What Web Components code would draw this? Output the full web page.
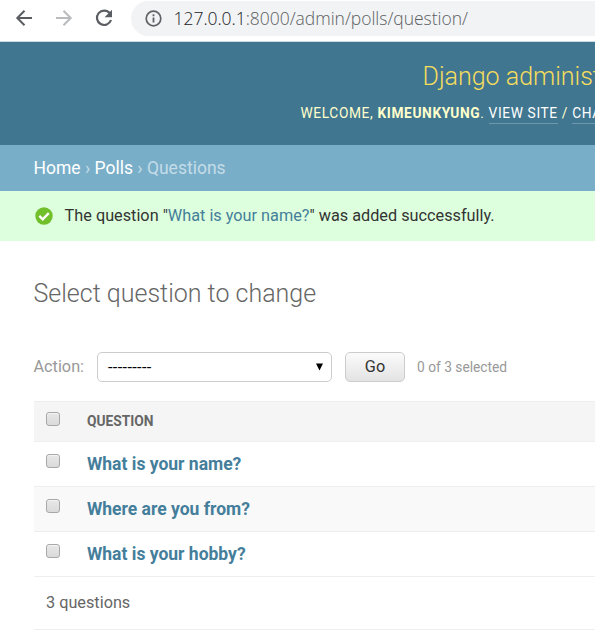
<!DOCTYPE html>
<html lang="en">
<head>
<meta charset="utf-8">
<title>Select question to change</title>
<style>
html,body{margin:0;height:100%;overflow:hidden;background:#fff}
body{font-family:Roboto,"Liberation Sans",sans-serif;font-size:16.25px;color:#333}
</style>
</head>
<body>
<admin-page></admin-page>
<script>
function define(name, html) {
  const template = document.createElement('template');
  template.innerHTML = html;
  customElements.define(name, class extends HTMLElement {
    constructor() {
      super();
      this.attachShadow({mode: 'open'}).append(template.content.cloneNode(true));
    }
  });
}

define('browser-bar', `<style>
:host{display:flex;height:42px;box-sizing:border-box;border-bottom:1px solid #cbdae1;background:#fff;padding:1px 0 5px 14px;overflow:hidden}
.nav{display:flex;align-items:center;width:117px;flex:none;gap:20px;height:34px}
svg{display:block;flex:none}
.url{flex:1;display:flex;align-items:center;height:35px;background:#f1f3f4;border-radius:18px 0 0 18px;padding-left:14px;gap:12px;font:300 17.5px/24px "Open Sans","Noto Sans",sans-serif;color:#5c5f63;white-space:nowrap}
.url b{font-weight:300;color:#202124}
.text{letter-spacing:-.03px;padding-bottom:2px;margin-left:-.5px}
</style>
<div class="nav">
<svg width="20" height="20" viewBox="0 0 20 20" fill="none" stroke="#5a5d61" stroke-width="2"><path d="M18 10H3.5M10.5 2.8 3.3 10l7.200 7.200"/></svg>
<svg width="20" height="20" viewBox="0 0 20 20" fill="none" stroke="#b9bbbd" stroke-width="2"><path d="M2 10h14.500M9.500 2.800l7.200 7.200-7.200 7.200"/></svg>
<svg width="20" height="20" viewBox="0 0 20 20"><path d="M15.800 5.300A7.200 7.200 0 1 0 17 12" fill="none" stroke="#5a5d61" stroke-width="2.200"/><path d="M18 1.800v7.400h-7.400z" fill="#5a5d61"/></svg>
</div>
<div class="url">
<svg width="17" height="17" viewBox="0 0 17 17"><circle cx="8.500" cy="8.500" r="7.300" fill="none" stroke="#5f6368" stroke-width="1.700"/><path d="M7.600 7.500h1.800v5H7.600zM7.600 4.300h1.800v1.900H7.600z" fill="#5f6368"/></svg>
<span class="text"><b>127.0.0.1</b>:8000/admin/polls/question/</span></div>`);

define('site-header', `<style>
:host{display:block;height:103px;box-sizing:border-box;background:#417690;color:#ffc;white-space:nowrap;overflow:hidden;padding-top:20px}
.brand{margin-left:422.5px;font-size:25px;font-weight:300;line-height:30px;color:#f5dd5d}
.tools{margin:11px 0 0 300.5px;font-size:13.75px;line-height:20px;letter-spacing:.62px;font-weight:400}
.tools b{font-weight:700}
a{color:#fff;border-bottom:1px solid rgba(255,255,255,.25);padding-bottom:2px}
</style>
<div class="brand">Django administration</div>
<div class="tools">WELCOME, <b>KIMEUNKYUNG</b>. <a>VIEW SITE</a> / <a>CHANGE PASSWORD</a></div>`);

define('bread-crumbs', `<style>
:host{display:flex;align-items:center;height:46px;background:#79aec8;color:#c4dce8;font-size:17.5px;padding-left:33.5px;white-space:pre}
b{font-weight:400;color:#fff}
</style><span><b>Home</b> › <b>Polls</b> › Questions</span>`);

define('success-message', `<style>
:host{display:flex;align-items:center;height:50px;background:#dfd;padding-left:35px;gap:12px;white-space:nowrap}
svg{flex:none}
.text{padding-bottom:2px;margin-left:-.4px}
::slotted(a){color:#447e9b}
</style><svg width="18" height="18" viewBox="0 0 18 18"><circle cx="9" cy="9" r="8.700" fill="#70bf2b"/><path d="M4.300 8.900 7.700 12.300 13.800 6.200" fill="none" stroke="#fff" stroke-width="2.400"/></svg><span class="text"><slot></slot></span>`);

define('action-bar', `<style>
:host{display:flex;align-items:center;height:30px;margin:43px 0 19px;color:#999;white-space:nowrap}
.label{width:63.500px;margin-left:-.5px;padding-bottom:2px}
.select{display:flex;justify-content:space-between;align-items:center;box-sizing:border-box;width:235px;height:30px;border:1px solid #ccc;border-radius:5px;padding:0 8px 0 10px;background:#fff;color:#000;font-size:16.25px;letter-spacing:.36px}
.go{box-sizing:border-box;width:60px;height:30px;border:1px solid #ccc;border-radius:5px;margin:0 12px 0 13px;background:linear-gradient(#fbfbfb,#e3e3e3);font:400 16.25px/28px Roboto,sans-serif;color:#333;text-align:center;padding:0}
.count{font-size:13.75px}
</style>
<span class="label">Action:</span><div class="select"><span>---------</span><svg width="7" height="8" viewBox="0 0 7 8"><path d="M0 .5h7L3.500 7.500z"/></svg></div><button class="go">Go</button><span class="count">0 of 3 selected</span>`);

define('check-box', `<style>
:host{display:block;box-sizing:border-box;width:14px;height:14px;border:1px solid #a8a8a8;border-radius:3px;background:linear-gradient(#e8e8e8,#dadada);box-shadow:inset 0 1px #f4f4f4}
</style>`);

define('question-row', `<style>
:host{display:flex;box-sizing:border-box;height:45px;border-bottom:1px solid #eee;padding:7px 0 0 12px;white-space:nowrap;color:#447e9b;font-size:17.5px;font-weight:700;line-height:30px}
:host([alt]){background:#f9f9f9}
:host([head]){height:41px;border-top:1px solid #eee;background:#f5f5f5;color:#666;font-size:13.75px;padding-top:4px}
check-box{margin:5px 27px 0 0}
:host([head]) check-box{margin-top:6px}
</style><check-box></check-box><span><slot></slot></span>`);

define('admin-page', `<style>
:host{display:block}
main{padding:38px 0 0 34px}
h1{font-size:25px;line-height:30px;font-weight:300;margin:0 0 0 -.5px;color:#666;white-space:nowrap}
.total{height:53px;box-sizing:border-box;border-bottom:1px solid #eee;padding-left:12px;line-height:51px;color:#666}
</style>
<browser-bar></browser-bar><site-header></site-header><bread-crumbs></bread-crumbs>
<success-message>The question "<a>What is your name?</a>" was added successfully.</success-message>
<main><h1>Select question to change</h1><action-bar></action-bar>
<question-row head>QUESTION</question-row>
<question-row>What is your name?</question-row>
<question-row alt>Where are you from?</question-row>
<question-row>What is your hobby?</question-row>
<div class="total">3 questions</div></main>`);
</script>
</body>
</html>
